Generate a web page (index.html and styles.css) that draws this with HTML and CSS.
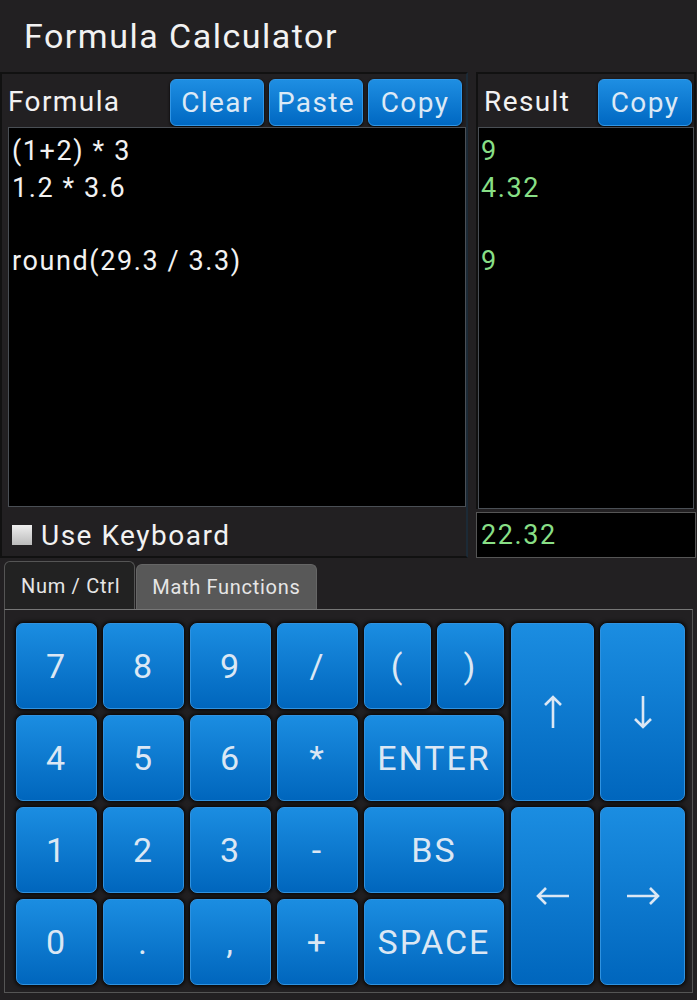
FILE: index.html
```html
<!DOCTYPE html>
<html lang="en">
<head>
    <meta charset="UTF-8">
    <meta name="viewport" content="width=device-width, initial-scale=1.0">
    <title>Formula Calculator</title>
    <link rel="stylesheet" href="styles.css">
</head>
<body>

<!-- Title Bar -->
<div class="app-title">Formula Calculator</div>

<!-- Formula / Result Section -->
<div class="top">
    <div class="formula-panel">
        <div class="panel-head">
            <span class="panel-label">Formula</span>
            <div class="head-buttons">
                <button class="small-btn">Clear</button>
                <button class="small-btn">Paste</button>
                <button class="small-btn">Copy</button>
            </div>
        </div>
        <div class="editor">
            <div class="line">(1+2) * 3</div>
            <div class="line">1.2 * 3.6</div>
            <div class="line">&nbsp;</div>
            <div class="line">round(29.3 / 3.3)</div>
        </div>
        <div class="keyboard-row">
            <span class="checkbox"></span>
            <span class="keyboard-label">Use Keyboard</span>
        </div>
    </div>

    <div class="result-col">
        <div class="result-panel">
            <div class="panel-head">
                <span class="panel-label">Result</span>
                <div class="head-buttons">
                    <button class="small-btn">Copy</button>
                </div>
            </div>
            <div class="results">
                <div class="line">9</div>
                <div class="line">4.32</div>
                <div class="line">&nbsp;</div>
                <div class="line">9</div>
            </div>
        </div>
        <div class="sum-box">22.32</div>
    </div>
</div>

<!-- Tabs -->
<div class="tabs">
    <div class="tab active">Num / Ctrl</div>
    <div class="tab">Math Functions</div>
</div>

<!-- Keypad -->
<div class="tab-panel">
    <div class="keypad">
        <button class="key">7</button>
        <button class="key">8</button>
        <button class="key">9</button>
        <button class="key">/</button>
        <button class="key">(</button>
        <button class="key">)</button>
        <button class="key tall arrow-left-col" aria-label="Up">
            <svg width="20" height="34" viewBox="0 0 20 34"><path d="M10 33 V2 M2 10 L10 2 L18 10"/></svg>
        </button>
        <button class="key tall" aria-label="Down">
            <svg width="20" height="34" viewBox="0 0 20 34"><path d="M10 1 V32 M2 24 L10 32 L18 24"/></svg>
        </button>

        <button class="key">4</button>
        <button class="key">5</button>
        <button class="key">6</button>
        <button class="key">*</button>
        <button class="key wide">ENTER</button>

        <button class="key">1</button>
        <button class="key">2</button>
        <button class="key">3</button>
        <button class="key">-</button>
        <button class="key wide">BS</button>
        <button class="key tall arrow-left-col" aria-label="Left">
            <svg width="34" height="20" viewBox="0 0 34 20"><path d="M33 10 H2 M10 2 L2 10 L10 18"/></svg>
        </button>
        <button class="key tall" aria-label="Right">
            <svg width="34" height="20" viewBox="0 0 34 20"><path d="M1 10 H32 M24 2 L32 10 L24 18"/></svg>
        </button>

        <button class="key">0</button>
        <button class="key">.</button>
        <button class="key">,</button>
        <button class="key">+</button>
        <button class="key wide">SPACE</button>
    </div>
</div>

</body>
</html>
```

FILE: styles.css
```css
body {
    margin: 0;
    padding: 0;
    width: 697px;
    height: 1000px;
    overflow: hidden;
    background-color: #222022;
    color: #f2f2f2;
    font-family: Roboto, "Noto Sans", sans-serif;
}

.app-title {
    height: 72px;
    padding-left: 24px;
    font-size: 34px;
    letter-spacing: 1.5px;
    line-height: 72px;
    box-sizing: border-box;
}

/* Formula and result panels */
.top {
    display: flex;
    gap: 8px;
    height: 486px;
}

.formula-panel {
    width: 468px;
    display: flex;
    flex-direction: column;
    border: 2px solid #111;
    border-right-color: #1c2a36;
    box-sizing: border-box;
}

.result-col {
    width: 220px;
    display: flex;
    flex-direction: column;
    gap: 3px;
}

.result-panel {
    flex: 1;
    display: flex;
    flex-direction: column;
    border: 2px solid #111;
    border-bottom: none;
}

.panel-head {
    height: 53px;
    display: flex;
    align-items: center;
    justify-content: space-between;
    padding: 0 2px 0 6px;
    box-sizing: border-box;
}

.formula-panel .panel-head {
    padding-right: 4px;
}

.panel-label {
    font-size: 28px;
    letter-spacing: 1.4px;
    padding-top: 1px;
}

.head-buttons {
    display: flex;
    gap: 5px;
    padding-top: 4px;
}

.small-btn {
    height: 47px;
    padding: 0 4px;
    min-width: 94px;
    background: linear-gradient(#1e8ee2, #0068c2);
    border: 1px solid #3096e6;
    border-radius: 6px;
    color: #dce9f6;
    font-family: Roboto, "Noto Sans", sans-serif;
    font-size: 28px;
    letter-spacing: 1.4px;
    box-shadow: 0 1px 3px #000;
}

.editor, .results {
    flex: 1;
    margin: 0 0 2px 6px;
    background-color: #000;
    border: 1px solid #4a4f55;
    padding: 5px 0 0 3px;
    font-size: 27px;
    letter-spacing: 1.6px;
    line-height: 36.7px;
}

.results {
    margin: 0;
    padding-left: 2px;
    color: #88df86;
}

.keyboard-row {
    height: 47px;
    display: flex;
    align-items: center;
    padding: 5px 0 0 10px;
    box-sizing: border-box;
}

.checkbox {
    width: 20px;
    height: 20px;
    background: linear-gradient(#eee, #bbb);
    margin-right: 9px;
}

.keyboard-label {
    font-size: 28px;
    letter-spacing: 1.5px;
}

.sum-box {
    height: 46px;
    background-color: #000;
    border: 1px solid #555;
    color: #88df86;
    font-size: 27px;
    letter-spacing: 1.6px;
    line-height: 44px;
    padding-left: 4px;
    box-sizing: border-box;
}

/* Tabs */
.tabs {
    display: flex;
    align-items: flex-end;
    gap: 1px;
    margin: 4px 0 0 4px;
    height: 47px;
}

.tab {
    height: 44px;
    padding: 0 16px 0 15px;
    background-color: #585858;
    border: 1px solid #666;
    border-bottom: none;
    border-radius: 6px 6px 0 0;
    font-size: 20px;
    letter-spacing: 0.7px;
    line-height: 44px;
    color: #e6e6e6;
}

.tab.active {
    height: 47px;
    padding: 0 14px 0 16px;
    background-color: #222;
    border-color: #555;
    line-height: 48px;
}

.tab-panel {
    margin-left: 4px;
    width: 689px;
    height: 384px;
    border: 1px solid #555;
    border-top-color: #777;
    box-sizing: border-box;
    padding: 13px 0 0 11px;
}

/* Keypad */
.keypad {
    display: grid;
    grid-template-columns: 81px 81px 81px 81px 67px 67px 84px 85px;
    grid-template-rows: repeat(4, 86px);
    column-gap: 6px;
    row-gap: 6px;
}

.key {
    background: linear-gradient(#1b8de1, #0066bd);
    border: 1px solid #2f92e0;
    border-radius: 7px;
    color: #dbe7f4;
    font-family: Roboto, "Noto Sans", sans-serif;
    font-size: 34px;
    letter-spacing: 2px;
    box-shadow: 0 0 4px 1px #000;
    padding: 0;
}

.key svg {
    display: block;
    margin: 0 auto;
    fill: none;
    stroke: #dbe7f4;
    stroke-width: 2.6;
}

.key.wide {
    grid-column: span 2;
}

.key.tall {
    grid-row: span 2;
}

.key.arrow-left-col {
    margin-left: 1px;
}
```
